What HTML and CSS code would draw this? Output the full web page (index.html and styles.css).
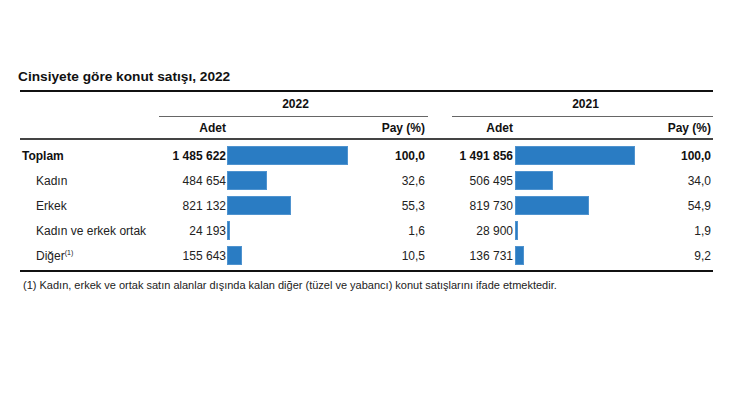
FILE: index.html
```html
<!DOCTYPE html>
<html lang="tr">
<head>
<meta charset="utf-8">
<title>Cinsiyete göre konut satışı, 2022</title>
<link rel="stylesheet" href="styles.css">
</head>
<body>
<div class="page">
  <h1 class="title">Cinsiyete göre konut satışı, 2022</h1>
  <div class="table">
    <div class="row yearrow">
      <div class="year y1">2022</div>
      <div class="year y2">2021</div>
    </div>
    <div class="row headrow">
      <div class="c-label"></div>
      <div class="c-num hd">Adet</div>
      <div class="c-bar"></div>
      <div class="c-pay hd">Pay (%)</div>
      <div class="c-gap"></div>
      <div class="c-num hd">Adet</div>
      <div class="c-bar"></div>
      <div class="c-pay hd">Pay (%)</div>
    </div>
    <div class="tbody">
      <div class="row data total">
        <div class="c-label">Toplam</div>
        <div class="c-num">1 485 622</div>
        <div class="c-bar"><span class="bar" style="width:121px"></span></div>
        <div class="c-pay">100,0</div>
        <div class="c-gap"></div>
        <div class="c-num">1 491 856</div>
        <div class="c-bar"><span class="bar" style="width:120px"></span></div>
        <div class="c-pay">100,0</div>
      </div>
      <div class="row data">
        <div class="c-label sub">Kadın</div>
        <div class="c-num">484 654</div>
        <div class="c-bar"><span class="bar" style="width:40px"></span></div>
        <div class="c-pay">32,6</div>
        <div class="c-gap"></div>
        <div class="c-num">506 495</div>
        <div class="c-bar"><span class="bar" style="width:38px"></span></div>
        <div class="c-pay">34,0</div>
      </div>
      <div class="row data">
        <div class="c-label sub">Erkek</div>
        <div class="c-num">821 132</div>
        <div class="c-bar"><span class="bar" style="width:64px"></span></div>
        <div class="c-pay">55,3</div>
        <div class="c-gap"></div>
        <div class="c-num">819 730</div>
        <div class="c-bar"><span class="bar" style="width:74px"></span></div>
        <div class="c-pay">54,9</div>
      </div>
      <div class="row data">
        <div class="c-label sub">Kadın ve erkek ortak</div>
        <div class="c-num">24 193</div>
        <div class="c-bar"><span class="bar" style="width:3px"></span></div>
        <div class="c-pay">1,6</div>
        <div class="c-gap"></div>
        <div class="c-num">28 900</div>
        <div class="c-bar"><span class="bar" style="width:3px"></span></div>
        <div class="c-pay">1,9</div>
      </div>
      <div class="row data">
        <div class="c-label sub">Diğer<sup class="note">(1)</sup></div>
        <div class="c-num">155 643</div>
        <div class="c-bar"><span class="bar" style="width:15px"></span></div>
        <div class="c-pay">10,5</div>
        <div class="c-gap"></div>
        <div class="c-num">136 731</div>
        <div class="c-bar"><span class="bar" style="width:9px"></span></div>
        <div class="c-pay">9,2</div>
      </div>
    </div>
  </div>
  <p class="foot">(1) Kadın, erkek ve ortak satın alanlar dışında kalan diğer (tüzel ve yabancı) konut satışlarını ifade etmektedir.</p>
</div>
</body>
</html>
```
FILE: styles.css
```css
* { box-sizing: border-box; }
html, body { margin: 0; padding: 0; background: #fff; }
body {
  font-family: "Liberation Sans", Arial, sans-serif;
  color: #222;
}
.page {
  padding: 69px 0 0 18px;
}
.title {
  margin: 0;
  font-size: 13.7px;
  line-height: 16px;
  font-weight: bold;
  color: #111;
}
.table {
  margin: 5px 0 0 2px;
  width: 693px;
  border-top: 2px solid #111;
  border-bottom: 2px solid #111;
  font-size: 12px;
}
.row {
  display: grid;
  grid-template-columns: 139px 68px 153px 48px 24px 63px 150px 48px;
  align-items: center;
}
.yearrow {
  height: 25px;
  align-items: stretch;
}
.year {
  display: flex;
  align-items: center;
  justify-content: center;
  font-weight: bold;
  color: #111;
  border-bottom: 1.5px solid #666;
}
.y1 { grid-column: 2 / 5; padding-left: 4px; }
.y2 { grid-column: 6 / 9; padding-left: 6px; }
.headrow {
  height: 23px;
  border-bottom: 2px solid #444;
}
.hd { font-weight: bold; color: #111; }
.tbody { padding: 3px 0 2px; }
.data { height: 25px; }
.c-num { text-align: right; padding-right: 1px; white-space: nowrap; }
.row > .c-num:nth-child(6) { padding-right: 2px; }
.c-pay { text-align: right; padding-right: 3px; }
.row > .c-pay:nth-child(8) { padding-right: 2px; }
.c-bar { display: flex; align-items: center; height: 100%; }
.bar {
  display: block;
  height: 19px;
  background: #2a7cc3;
  border: 1px solid #4f93cf;
}
.c-label { padding-left: 2px; white-space: nowrap; }
.c-label.sub { padding-left: 16px; }
.total { font-weight: bold; color: #111; }
.note {
  font-size: 7px;
  vertical-align: 5px;
  line-height: 0;
}
.foot {
  margin: 7px 0 0 5px;
  font-size: 11px;
  line-height: 13px;
  color: #222;
}
```
